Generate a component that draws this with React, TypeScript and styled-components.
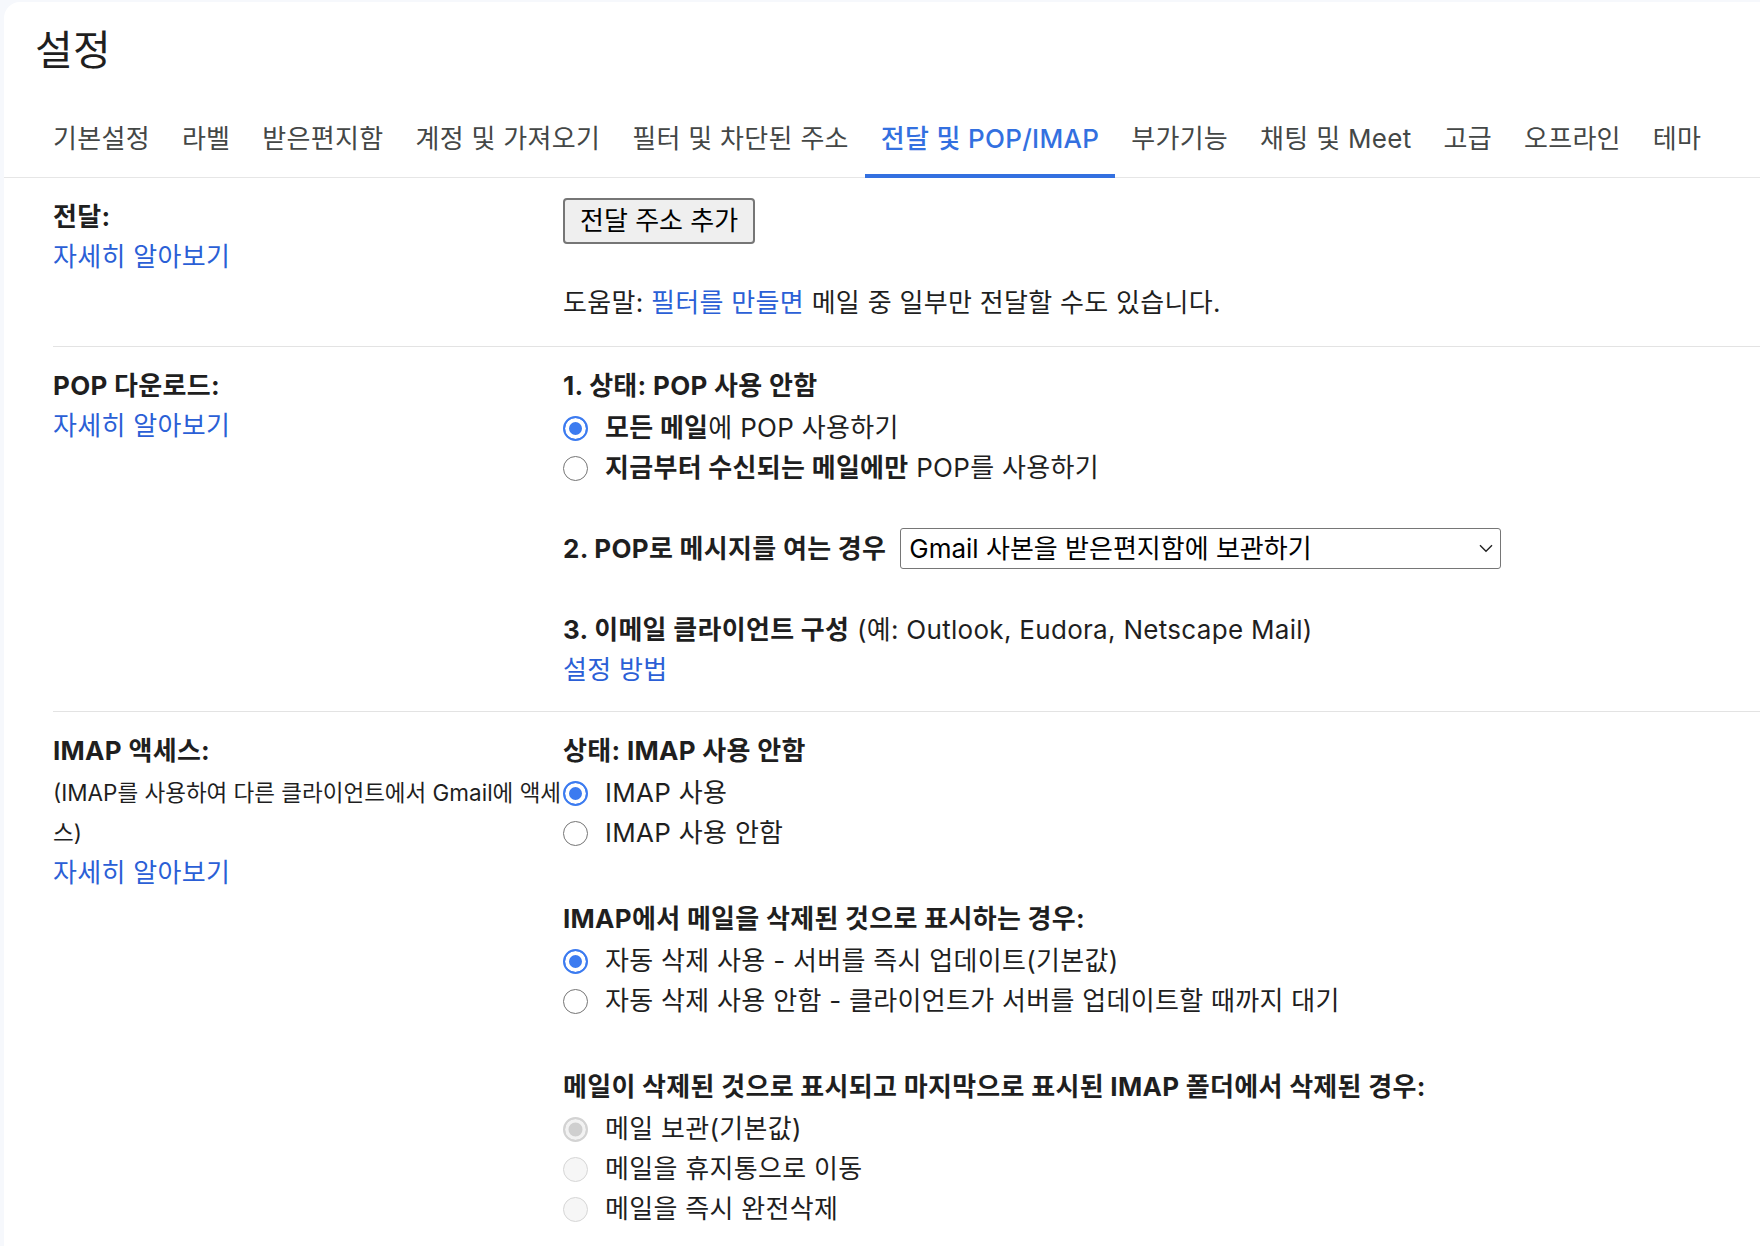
import React from 'react'
import styled, { createGlobalStyle, css } from 'styled-components'

const TABS = [
  '기본설정',
  '라벨',
  '받은편지함',
  '계정 및 가져오기',
  '필터 및 차단된 주소',
  '전달 및 POP/IMAP',
  '부가기능',
  '채팅 및 Meet',
  '고급',
  '오프라인',
  '테마',
]

const ACTIVE_TAB = '전달 및 POP/IMAP'

const GlobalStyle = createGlobalStyle`
  html, body {
    margin: 0;
    background: #f6f8fc;
  }
  body {
    font-family: Inter, "Noto Sans CJK KR", sans-serif;
    color: #1f1f1f;
    letter-spacing: 0.3px;
  }
`

const Card = styled.div`
  margin: 2px 0 0 4px;
  min-height: 1244px;
  background: #fff;
  border-top-left-radius: 16px;
`

const Title = styled.h1`
  margin: 0;
  padding: 24px 0 0 31px;
  font-size: 41px;
  font-weight: 400;
  line-height: 48px;
  color: #1f1f1f;
`

const TabBar = styled.nav`
  display: flex;
  margin-top: 22px;
  padding-left: 33px;
  border-bottom: 1px solid #e6e6e6;
`

const Tab = styled.div<{ $active?: boolean }>`
  position: relative;
  display: flex;
  align-items: center;
  height: 81px;
  padding: 0 16px;
  font-size: 26px;
  letter-spacing: 0.3px;
  white-space: nowrap;
  color: ${({ $active }) => ($active ? '#3370e0' : '#444746')};
  font-weight: ${({ $active }) => ($active ? 500 : 400)};

  ${({ $active }) =>
    $active &&
    css`
      &::after {
        content: '';
        position: absolute;
        left: 0;
        right: 0;
        bottom: -1px;
        height: 4px;
        background: #3370e0;
      }
    `}
`

const Section = styled.section<{ $first?: boolean; $last?: boolean }>`
  display: grid;
  grid-template-columns: 510px 1fr;
  margin-left: 49px;
  padding: ${({ $first, $last }) => ($first ? '19px 0 23px' : $last ? '19px 0 0' : '19px 0 21px')};
  border-bottom: ${({ $last }) => ($last ? 'none' : '1px solid #e3e3e3')};
  font-size: 26px;
  line-height: 40px;
`

const LabelCol = styled.div`
  min-width: 0;
`

const Heading = styled.div<{ $gap?: number }>`
  font-weight: 700;
  margin-top: ${({ $gap }) => $gap || 0}px;
`

const Note = styled.div`
  margin-top: 2px;
  font-size: 22.5px;
  letter-spacing: 0;
  line-height: 40px;
`

const Link = styled.a`
  color: #2b5fd6;
  text-decoration: none;
  cursor: pointer;
`

const Block = styled.div<{ $gap?: number }>`
  margin-top: ${({ $gap }) => $gap || 0}px;
`

const Options = styled.div`
  margin-top: 2px;
`

const Option = styled.label`
  display: flex;
  align-items: center;
  gap: 17px;
  height: 40px;
  cursor: pointer;
`

const Radio = styled.input.attrs({ type: 'radio' })`
  appearance: none;
  flex: none;
  box-sizing: border-box;
  width: 25px;
  height: 25px;
  margin: 0;
  border-radius: 50%;
  border: 1.5px solid #757575;
  background: #fff;

  &:checked {
    border: 2px solid #3c7bf0;
    background: #3c7bf0;
    box-shadow: inset 0 0 0 4px #fff;
  }

  &:disabled {
    border-color: #d6d6d6;
    background: #f6f6f6;
  }

  &:disabled:checked {
    border: 2px solid #d3d3d3;
    background: #cfcfcf;
    box-shadow: inset 0 0 0 3.5px #f2f2f2;
  }
`

const Button = styled.button`
  box-sizing: border-box;
  height: 46px;
  padding: 0 15px;
  font: inherit;
  font-size: 26px;
  line-height: 1;
  color: #000;
  background: #efefef;
  border: 2px solid #767676;
  border-radius: 4px;
`

const Help = styled.div`
  margin-top: 39px;
`

const SelectRow = styled.div`
  display: flex;
  align-items: center;
  gap: 14px;
  margin-top: 40px;
`

const SelectWrap = styled.div`
  position: relative;
  width: 601px;
  height: 41px;

  svg {
    position: absolute;
    right: 8px;
    top: 16px;
    pointer-events: none;
  }
`

const Select = styled.select`
  appearance: none;
  box-sizing: border-box;
  width: 100%;
  height: 100%;
  padding: 0 36px 0 8px;
  font: inherit;
  font-size: 26px;
  color: #000;
  background: #fff;
  border: 1.5px solid #767676;
  border-radius: 3px;
`

const Chevron = () => (
  <svg width="14" height="9" viewBox="0 0 14 9">
    <path d="M1 1.2l6 6 6-6" fill="none" stroke="#222" strokeWidth="1.4" />
  </svg>
)

const App: React.FC = () => {
  return (
    <>
      <GlobalStyle />
      <Card>
        <Title>설정</Title>
        <TabBar>
          {TABS.map((tab) => (
            <Tab key={tab} $active={tab === ACTIVE_TAB}>
              {tab}
            </Tab>
          ))}
        </TabBar>

        {/* 전달 */}
        <Section $first>
          <LabelCol>
            <Heading>전달:</Heading>
            <Link>자세히 알아보기</Link>
          </LabelCol>
          <div>
            <Block $gap={1}>
              <Button>전달 주소 추가</Button>
            </Block>
            <Help>
              도움말: <Link>필터를 만들면</Link> 메일 중 일부만 전달할 수도 있습니다.
            </Help>
          </div>
        </Section>

        {/* POP 다운로드 */}
        <Section>
          <LabelCol>
            <Heading>POP 다운로드:</Heading>
            <Link>자세히 알아보기</Link>
          </LabelCol>
          <div>
            <Heading>1. 상태: POP 사용 안함</Heading>
            <Options>
              <Option>
                <Radio name="pop" defaultChecked />
                <span>
                  <b>모든 메일</b>에 POP 사용하기
                </span>
              </Option>
              <Option>
                <Radio name="pop" />
                <span>
                  <b>지금부터 수신되는 메일에만</b> POP를 사용하기
                </span>
              </Option>
            </Options>
            <SelectRow>
              <b>2. POP로 메시지를 여는 경우</b>
              <SelectWrap>
                <Select defaultValue="keep">
                  <option value="keep">Gmail 사본을 받은편지함에 보관하기</option>
                  <option value="read">Gmail 사본을 읽은 상태로 표시하기</option>
                  <option value="archive">Gmail 사본을 보관처리하기</option>
                  <option value="delete">Gmail 사본 삭제하기</option>
                </Select>
                <Chevron />
              </SelectWrap>
            </SelectRow>
            <Block $gap={41}>
              <b>3. 이메일 클라이언트 구성</b> (예: Outlook, Eudora, Netscape Mail)
            </Block>
            <Link>설정 방법</Link>
          </div>
        </Section>

        {/* IMAP 액세스 */}
        <Section $last>
          <LabelCol>
            <Heading>IMAP 액세스:</Heading>
            <Note>(IMAP를 사용하여 다른 클라이언트에서 Gmail에 액세스)</Note>
            <Link>자세히 알아보기</Link>
          </LabelCol>
          <div>
            <Heading>상태: IMAP 사용 안함</Heading>
            <Options>
              <Option>
                <Radio name="imap" defaultChecked />
                <span>IMAP 사용</span>
              </Option>
              <Option>
                <Radio name="imap" />
                <span>IMAP 사용 안함</span>
              </Option>
            </Options>

            <Heading $gap={46}>IMAP에서 메일을 삭제된 것으로 표시하는 경우:</Heading>
            <Options>
              <Option>
                <Radio name="expunge" defaultChecked />
                <span>자동 삭제 사용 - 서버를 즉시 업데이트(기본값)</span>
              </Option>
              <Option>
                <Radio name="expunge" />
                <span>자동 삭제 사용 안함 - 클라이언트가 서버를 업데이트할 때까지 대기</span>
              </Option>
            </Options>

            <Heading $gap={46}>
              메일이 삭제된 것으로 표시되고 마지막으로 표시된 IMAP 폴더에서 삭제된 경우:
            </Heading>
            <Options>
              <Option>
                <Radio name="deleted" defaultChecked disabled />
                <span>메일 보관(기본값)</span>
              </Option>
              <Option>
                <Radio name="deleted" disabled />
                <span>메일을 휴지통으로 이동</span>
              </Option>
              <Option>
                <Radio name="deleted" disabled />
                <span>메일을 즉시 완전삭제</span>
              </Option>
            </Options>
          </div>
        </Section>
      </Card>
    </>
  )
}

export default App
